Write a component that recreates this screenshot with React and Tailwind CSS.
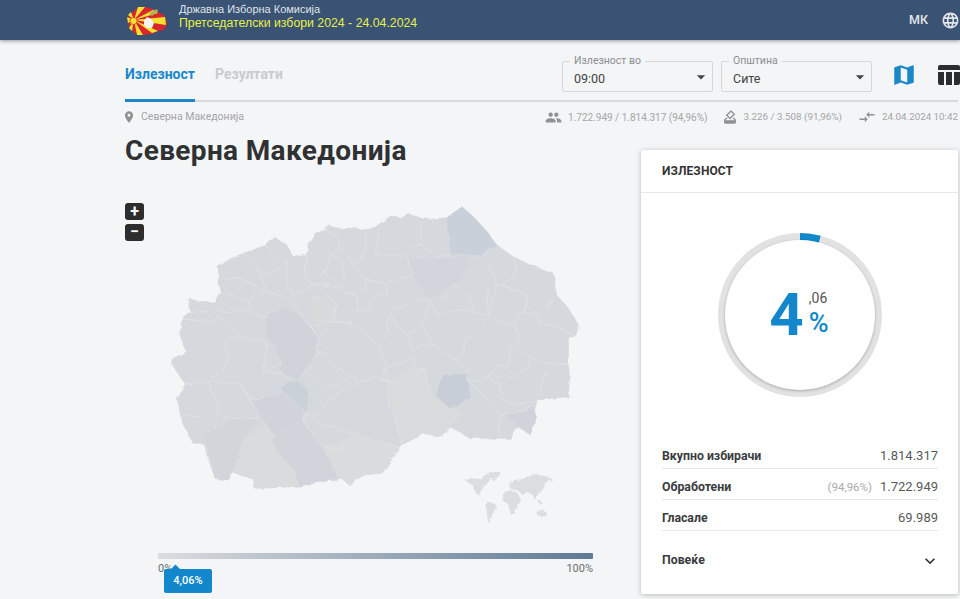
import { MdArrowDropDown, MdCompareArrows, MdExpandMore, MdHowToVote, MdLanguage, MdMap, MdPeople, MdPlace } from 'react-icons/md'

const OUTLINE = 'M905 35 L895 45 L860 68 L820 72 L790 72 L745 55 L725 70 L690 65 L660 85 L635 105 L580 100 L540 100 L505 90 L498 105 L465 115 L445 145 L440 180 L400 188 L380 150 L345 127 L320 150 L250 175 L215 190 L175 215 L175 250 L180 290 L165 320 L125 320 L85 312 L90 350 L65 370 L60 420 L80 470 L40 490 L38 510 L60 545 L80 570 L52 610 L65 680 L100 745 L130 745 L165 850 L205 855 L220 835 L280 850 L285 880 L350 878 L415 873 L490 860 L545 850 L570 872 L610 840 L665 835 L720 760 L735 745 L795 715 L835 725 L875 700 L925 725 L1000 730 L1050 730 L1075 695 L1110 718 L1125 690 L1130 615 L1225 605 L1228 550 L1225 490 L1225 430 L1258 395 L1225 340 L1190 300 L1180 235 L1110 210 L1060 185 L1010 150 L985 115 L945 70 Z'

const REGIONS = [
  ['M860 68 L905 35 L945 70 L985 115 L1010 150 L960 183 L870 175 L865 110 Z', '#c9d0d9'],
  ['M850 540 L925 535 L930 610 L870 640 L830 605 L838 565 Z', '#c7ced8'],
  ['M315 370 L375 335 L420 365 L470 420 L465 480 L410 555 L355 525 L365 500 L345 450 L320 430 Z', '#d0d4da'],
  ['M685 560 L760 520 L790 520 L815 600 L870 640 L910 655 L875 695 L835 725 L795 715 L722 745 L705 660 Z', '#dadbdc'],
  ['M220 835 L250 730 L315 690 L345 760 L410 835 L415 873 L285 880 L280 850 Z', '#dadbdc'],
  ['M490 760 L580 720 L720 760 L665 835 L610 840 L570 872 L545 850 L510 810 Z', '#dadbdc'],
  ['M455 310 L505 300 L530 330 L520 380 L460 390 Z', '#d9dadc'],
  ['M270 615 L360 590 L430 650 L430 680 L345 720 L300 660 Z', '#d0d4da'],
  ['M360 580 L410 555 L445 590 L440 650 L400 620 Z', '#cbd1d9'],
  ['M130 705 L200 670 L300 670 L250 730 L215 830 L205 855 L165 850 Z', '#d2d5da'],
  ['M340 730 L430 680 L490 760 L530 840 L490 860 L415 873 L410 835 L345 760 Z', '#d1d4da'],
  ['M1040 660 L1125 635 L1125 690 L1110 718 L1075 695 Z', '#d0d4da'],
  ['M745 190 L935 185 L885 270 L800 310 L760 240 Z', '#d2d5db'],
]

const BORDERS = [
  '250,175 290,215 300,235 360,225 380,195', '320,150 355,200', '175,250 240,250 290,275 270,320 180,290',
  '85,350 200,350 265,345 270,320', '65,370 130,380 180,365 205,395 240,425 210,435 190,450 205,480 190,525 145,560',
  '240,425 320,440', '320,370 265,345', '300,235 320,290 270,320', '320,290 385,310 405,335', '380,195 380,260 400,305 450,275 505,270',
  '440,180 435,240 455,270 505,265 560,295', '498,105 530,125 540,155 510,180 500,225 480,240', '540,155 580,210 590,225 615,250 615,280 560,295',
  '615,105 615,170 590,210', '510,180 545,195 555,260', '480,220 500,240 530,265 555,275', '455,310 505,300 530,330 520,380 460,390',
  '560,295 590,300 595,345 570,385 520,380', '595,345 630,345 640,310 680,285', '655,110 650,180 740,180 765,155 790,150', '785,80 785,150 830,185 870,175',
  '740,185 760,240 680,265 640,260 615,250', '680,265 680,300 710,335 690,350 680,420 660,460 620,420 570,385 520,385 480,420', '710,335 800,310 815,320 785,385 745,420 715,400 690,350',
  '815,320 830,360 900,345 980,360', '885,270 935,310 940,350', '885,270 860,300 815,320', '985,200 1010,270 985,360', '935,185 985,175 1010,150', '1065,185 1065,240 1030,270 1060,285 1105,300 1085,350 1060,390 985,370 940,420 915,430 910,460 885,495 820,450 785,385',
  '1010,270 1060,285', '985,370 980,270', '1105,300 1090,350 1140,355 1180,310', '1130,360 1140,385 1190,395 1240,420', '1060,390 1075,420 1065,450 1115,490 1170,505 1228,510',
  '1065,450 1045,460 1055,500 1010,520 1000,540 1060,545 1100,520 1115,490', '885,495 920,520 925,560 985,545 1010,520', '925,560 960,590 1020,660 1015,715', '985,545 1020,570 1025,610 1065,630 1130,615', '1170,505 1145,555 1145,605',
  '1020,660 1040,660 1125,635', '745,420 760,470 780,450 820,450', '660,460 680,520 760,490 760,520', '680,520 685,560 650,550 600,560 575,545 520,510 490,470 465,480',
  '480,420 470,470', '410,555 440,530 480,470', '440,530 490,590 575,545', '490,590 470,610 445,590', '470,610 490,630 490,650 460,660 440,650', '430,680 440,655 490,690 580,715 720,760',
  '580,715 550,755 490,760 430,680', '490,650 520,600 600,560', '680,520 660,550 685,560', '685,560 685,630 705,660 722,745', '815,600 790,520 760,520',
  '360,590 340,600 270,615 240,565 145,560 80,570', '145,560 175,640 165,700', '240,565 270,615 300,660', '300,670 200,670 165,700 130,705', '310,535 365,535 385,555', '365,500 310,535 320,440',
  '68,660 120,662', '345,720 340,735 315,690', '470,420 450,390 405,335',
]

function Logo() {
  return (
    <svg width="40" height="29" viewBox="0 0 40 29" className="shrink-0">
      <path d="M1 12 L5 7 L10 2 L18 1 L26 3 L31 6 L37 9 L40 17 L37 24 L31 25 L25 28 L15 29 L7 27 L2 21 Z" fill="#d8262c" />
      <path d="M7 14 L11 1 L18 1 Z M7 14 L26 4 L31 7 Z M7 14 L38 11 L39 19 Z M7 14 L25 27 L31 25 Z M7 14 L10 29 L16 29 Z M7 14 L0 11 L1 17 Z M7 14 L4 6 L1 9 Z M7 14 L2 22 L5 25 Z" fill="#f6e030" />
      <circle cx="6.5" cy="15" r="3.6" fill="#f6e030" stroke="#d8262c" strokeWidth="0.7" />
      <path d="M22 7 L30 3 L31 5 L25 10 Z" fill="#a9b35a" />
      <path d="M17 15 L20 11 L24 13 L27 17 L25 22 L20 22 L17 19 Z" fill="#f4f4f4" />
    </svg>
  )
}

function SelectBox({ label, value }) {
  return (
    <div className="relative mt-[4px] w-[151px] h-[31px] border border-[#d5d7da] rounded-[2px] flex items-center justify-between pl-[11px] pr-[1px]">
      <span className="absolute left-[7px] top-[-7px] bg-[#f3f5f7] px-[4px] text-[10.5px] leading-[12px] text-[#8b8d90]">{label}</span>
      <span className="mt-[6px] text-[12.5px] text-[#444]">{value}</span>
      <MdArrowDropDown className="text-[20px] text-[#444]" />
    </div>
  )
}

function Stat({ icon, text, className }) {
  return (
    <div className={`flex items-center gap-[6px] ${className}`}>
      {icon}
      <span>{text}</span>
    </div>
  )
}

function MapChart() {
  return (
    <svg width="430" height="310" viewBox="0 0 1290 930" className="block">
      <defs>
        <filter id="rough" x="-5%" y="-5%" width="110%" height="110%">
          <feTurbulence type="fractalNoise" baseFrequency="0.035" numOctaves="2" seed="4" />
          <feDisplacementMap in="SourceGraphic" scale="16" />
        </filter>
      </defs>
      <g filter="url(#rough)">
        <path d={OUTLINE} fill="#d5d8dc" stroke="#d5d8dc" strokeWidth="2" strokeLinejoin="round" />
        {REGIONS.map(([d, fill], i) => (
          <path key={i} d={d} fill={fill} />
        ))}
        {BORDERS.map((points, i) => (
          <polyline key={i} points={points} fill="none" stroke="#e4e6e8" strokeWidth="2" strokeLinejoin="round" />
        ))}
      </g>
    </svg>
  )
}

function WorldMap() {
  return (
    <svg width="90" height="54" viewBox="0 0 270 162" fill="#dcdddf">
      <defs>
        <filter id="roughWorld" x="-5%" y="-5%" width="110%" height="110%">
          <feTurbulence type="fractalNoise" baseFrequency="0.12" numOctaves="2" seed="7" />
          <feDisplacementMap in="SourceGraphic" scale="9" />
        </filter>
      </defs>
      <g filter="url(#roughWorld)">
        <path d="M2 28 L20 22 L50 24 L60 14 L80 10 L76 30 L66 42 L58 48 L50 62 L42 72 L34 64 L28 44 L12 34 Z" />
        <path d="M72 4 L110 2 L104 18 L88 30 L78 18 Z" />
        <path d="M64 100 L78 92 L98 102 L88 126 L78 150 L72 154 L70 128 Z" />
        <path d="M120 68 L136 58 L156 62 L166 76 L172 88 L160 106 L152 128 L140 130 L132 100 L116 88 Z" />
        <path d="M136 42 L146 28 L176 24 L210 10 L240 14 L268 24 L244 34 L236 56 L222 70 L212 86 L204 70 L190 64 L176 72 L160 58 L140 54 Z" />
        <path d="M216 122 L234 114 L250 128 L246 136 L222 134 Z" />
        <path d="M218 84 L232 92 L238 102 L224 96 Z" />
      </g>
    </svg>
  )
}

export default function App() {
  return (
    <div className="w-[960px] h-[599px] overflow-hidden bg-[#f3f5f7] font-['Roboto',sans-serif]">
      <header className="relative z-10 h-10 bg-[#3a5273] shadow-[0_1px_4px_rgba(0,0,0,0.4)] flex items-center pl-[127px]">
        <Logo />
        <div className="ml-[12px] mb-[7px] flex flex-col font-['Liberation_Sans',sans-serif]">
          <span className="text-[11px] leading-[13px] text-[#dfe4ea]">Државна Изборна Комисија</span>
          <span className="text-[12.3px] leading-[14px] text-[#e6f04a]">Претседателски избори 2024 - 24.04.2024</span>
        </div>
        <span className="ml-auto text-[12.5px] font-medium text-[#e3e7ec]">МК</span>
        <MdLanguage className="ml-[13px] text-[19px] text-[#e3e7ec]" />
      </header>

      <main className="pl-[125px] pr-[2px]">
        <div className="h-[62px] border-b-2 border-[#d8dadd] flex items-end justify-between">
          <div className="flex gap-[20px] h-[62px] mb-[-2px]">
            <div className="h-[62px] flex items-center border-b-[3px] border-[#1a87c9] text-[14px] font-bold text-[#1a87c9] pt-[10px]">Излезност</div>
            <div className="h-[62px] flex items-center text-[14px] font-bold text-[#c9cbce] pt-[7px]">Резултати</div>
          </div>
          <div className="flex items-center gap-[8px] h-[62px] mr-[-2px] pt-[11px]">
            <SelectBox label="Излезност во" value="09:00" />
            <SelectBox label="Општина" value="Сите" />
            <MdMap className="ml-[11px] text-[26px] text-[#1a87c9]" />
            <svg width="22" height="20" viewBox="0 0 22 20" fill="#2b2d30" className="ml-[13px]">
              <path d="M2 0 H20 Q22 0 22 2 V5 H0 V2 Q0 0 2 0 Z M0 7 H6 V20 H2 Q0 20 0 18 Z M8 7 H14 V20 H8 Z M16 7 H22 V18 Q22 20 20 20 H16 Z" />
            </svg>
          </div>
        </div>

        <div className="h-[29px] flex items-center justify-between text-[#a3a5a8] pt-[1px]">
          <div className="flex items-center gap-[5px] text-[10.5px]">
            <MdPlace className="text-[#8f9194] text-[14px] ml-[-3px]" />
            <span>Северна Македонија</span>
          </div>
          <div className="flex items-center gap-[16px]">
            <Stat className="text-[10px] mr-[-2px]" icon={<MdPeople className="text-[17px] text-[#8f9194]" />} text="1.722.949 / 1.814.317 (94,96%)" />
            <Stat className="text-[9.8px]" icon={<MdHowToVote className="text-[16px] text-[#8f9194]" />} text="3.226 / 3.508 (91,96%)" />
            <Stat className="text-[9.8px]" icon={<MdCompareArrows className="text-[18px] text-[#8f9194]" />} text="24.04.2024 10:42" />
          </div>
        </div>

        <div className="flex">
          <section className="w-[516px] shrink-0">
            <h1 className="mt-[4px] text-[28px] leading-[32px] font-bold text-[#2f3133] tracking-[0.35px]">Северна Македонија</h1>

            <div className="relative mt-[28px] pl-[35px] h-[310px]">
              <MapChart />
              <div className="absolute left-0 top-[8px] flex flex-col gap-[4px]">
                <div className="w-[19px] h-[17px] rounded-[3px] bg-[#2d2d2d] text-white text-[16px] leading-[17px] font-bold text-center">+</div>
                <div className="w-[19px] h-[17px] rounded-[3px] bg-[#2d2d2d] text-white text-[16px] leading-[16px] font-bold text-center">−</div>
              </div>
              <div className="absolute left-[339px] top-[276px]">
                <WorldMap />
              </div>
            </div>

            <div className="relative mt-[48px] ml-[33px] w-[435px]">
              <div className="h-[6px] rounded-[1px] bg-gradient-to-r from-[#dcdddf] to-[#5f7a94]" />
              <div className="flex justify-between text-[11px] leading-[13px] text-[#6c6e71] mt-[3px]">
                <span>0%</span>
                <span>100%</span>
              </div>
              <div className="absolute left-[6px] top-[16px] w-[48px] h-[24px] rounded-[2px] bg-[#1287cb] text-white text-[11px] font-medium flex items-center justify-center">
                4,06%
                <span className="absolute left-[8px] top-[-3px] w-[7px] h-[7px] rotate-45 bg-[#1287cb]" />
              </div>
            </div>
          </section>

          <aside className="mt-[19px] w-[317px] h-[444px] bg-white rounded-[2px] shadow-[0_1px_5px_rgba(0,0,0,0.25)] flex flex-col">
            <div className="h-[43px] flex items-center px-[21px] border-b border-[#e8e8e8] text-[12px] font-bold text-[#333] tracking-[0.1px]">ИЗЛЕЗНОСТ</div>

            <div className="relative mt-[40px] ml-[77px] w-[164px] h-[164px]">
              <svg width="164" height="164" viewBox="0 0 164 164" className="absolute inset-0">
                <circle cx="82" cy="82" r="78" fill="none" stroke="#e2e2e2" strokeWidth="8" />
                <circle cx="82" cy="82" r="78" fill="none" stroke="#1287cb" strokeWidth="8" strokeDasharray="19.9 470" transform="rotate(-90 82 82)" />
              </svg>
              <div className="absolute inset-[7px] rounded-full bg-white shadow-[0_1px_3px_rgba(0,0,0,0.25)] flex items-center justify-center pr-[2px]">
                <span className="text-[60px] leading-[60px] font-bold text-[#1287cb]">4</span>
                <div className="ml-[5px] flex flex-col items-start mt-[-2px]">
                  <span className="text-[14px] leading-[15px] text-[#555]">,06</span>
                  <span className="text-[27px] leading-[27px] font-medium text-[#1287cb] mt-[4px]">%</span>
                </div>
              </div>
            </div>

            <div className="mt-[41px] pl-[21px] pr-[20px] text-[12.3px]">
              <div className="h-[31px] pt-[6px] border-b border-[#e8e8e8] flex items-center justify-between">
                <span className="font-bold text-[#3a3c3e]">Вкупно избирачи</span>
                <span className="text-[13px] text-[#58595b]">1.814.317</span>
              </div>
              <div className="h-[31px] pt-[6px] border-b border-[#e8e8e8] flex items-center justify-between">
                <span className="font-bold text-[#3a3c3e]">Обработени</span>
                <span className="text-[13px] text-[#58595b]"><span className="text-[11.5px] text-[#aaa] mr-[8px]">(94,96%)</span>1.722.949</span>
              </div>
              <div className="h-[31px] pt-[6px] border-b border-[#e8e8e8] flex items-center justify-between">
                <span className="font-bold text-[#3a3c3e]">Гласале</span>
                <span className="text-[13px] text-[#58595b]">69.989</span>
              </div>
              <div className="mt-[14px] h-[31px] flex items-center justify-between">
                <span className="font-bold text-[#3a3c3e]">Повеќе</span>
                <MdExpandMore className="text-[20px] text-[#333] mr-[-2px]" />
              </div>
            </div>
          </aside>
        </div>
      </main>
    </div>
  )
}
